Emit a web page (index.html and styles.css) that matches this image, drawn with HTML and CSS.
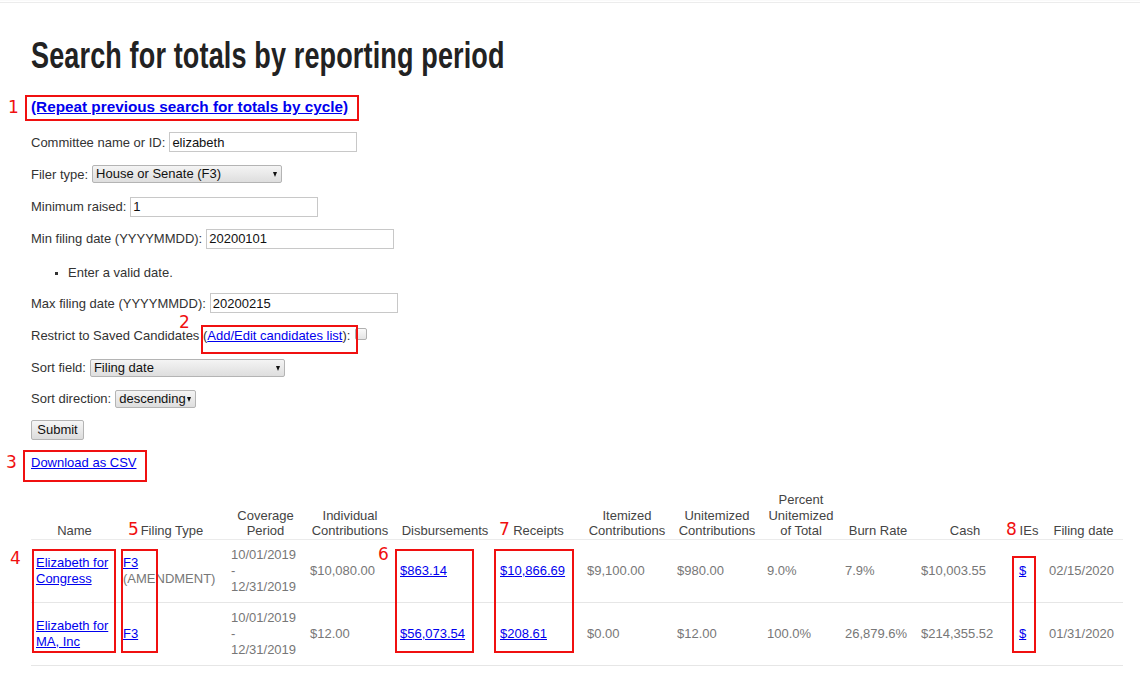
FILE: index.html
```html
<!DOCTYPE html>
<html>
<head>
<meta charset="utf-8">
<title>Search for totals by reporting period</title>
<link rel="stylesheet" href="styles.css">
</head>
<body>
<div class="topbar"></div>
<div class="page">
  <h1 class="title"><span class="title-text">Search for totals by reporting period</span></h1>
  <p class="repeat"><a href="#">(Repeat previous search for totals by cycle)</a></p>

  <form class="form">
    <div class="row"><label>Committee name or ID:</label><input class="text" type="text" value="elizabeth"></div>
    <div class="row"><label>Filer type:</label><span class="sel sel-filer">House or Senate (F3)</span></div>
    <div class="row"><label>Minimum raised:</label><input class="text" type="text" value="1"></div>
    <div class="row"><label>Min filing date (YYYYMMDD):</label><input class="text" type="text" value="20200101"></div>
    <ul class="errors"><li>Enter a valid date.</li></ul>
    <div class="row"><label>Max filing date (YYYYMMDD):</label><input class="text" type="text" value="20200215"></div>
    <div class="row"><label>Restrict to Saved Candidates (<a href="#">Add/Edit candidates list</a>):</label><span class="check"></span></div>
    <div class="row row-tight"><label>Sort field:</label><span class="sel sel-sort">Filing date</span></div>
    <div class="row row-tight"><label>Sort direction:</label><span class="sel sel-dir">descending</span></div>
    <div class="row"><span class="btn">Submit</span></div>
    <div class="row"><a href="#">Download as CSV</a></div>
  </form>

  <table class="results">
    <thead>
      <tr>
        <th class="c-name">Name</th>
        <th class="c-type">Filing Type</th>
        <th class="c-cov">Coverage<br>Period</th>
        <th class="c-ind">Individual<br>Contributions</th>
        <th class="c-dis">Disbursements</th>
        <th class="c-rec">Receipts</th>
        <th class="c-itm">Itemized<br>Contributions</th>
        <th class="c-unit">Unitemized<br>Contributions</th>
        <th class="c-pct">Percent<br>Unitemized<br>of Total</th>
        <th class="c-burn">Burn Rate</th>
        <th class="c-cash">Cash</th>
        <th class="c-ies">IEs</th>
        <th class="c-date">Filing date</th>
      </tr>
    </thead>
    <tbody>
      <tr>
        <td><a href="#">Elizabeth for Congress</a></td>
        <td><a href="#">F3</a><br>(AMENDMENT)</td>
        <td>10/01/2019<br>-<br>12/31/2019</td>
        <td>$10,080.00</td>
        <td><a href="#">$863.14</a></td>
        <td><a href="#">$10,866.69</a></td>
        <td>$9,100.00</td>
        <td>$980.00</td>
        <td>9.0%</td>
        <td>7.9%</td>
        <td>$10,003.55</td>
        <td><a href="#">$</a></td>
        <td>02/15/2020</td>
      </tr>
      <tr>
        <td><a href="#">Elizabeth for MA, Inc</a></td>
        <td><a href="#">F3</a></td>
        <td>10/01/2019<br>-<br>12/31/2019</td>
        <td>$12.00</td>
        <td><a href="#">$56,073.54</a></td>
        <td><a href="#">$208.61</a></td>
        <td>$0.00</td>
        <td>$12.00</td>
        <td>100.0%</td>
        <td>26,879.6%</td>
        <td>$214,355.52</td>
        <td><a href="#">$</a></td>
        <td>01/31/2020</td>
      </tr>
    </tbody>
  </table>
</div>

<div class="notes">
  <div class="box b1"></div><span class="num n1">1</span>
  <div class="box b2"></div><span class="num n2">2</span>
  <div class="box b3"></div><span class="num n3">3</span>
  <div class="box b4"></div><span class="num n4">4</span>
  <div class="box b5"></div><span class="num n5">5</span>
  <div class="box b6"></div><span class="num n6">6</span>
  <div class="box b7"></div><span class="num n7">7</span>
  <div class="box b8"></div><span class="num n8">8</span>
</div>
</body>
</html>
```
FILE: styles.css
```css
html, body {
  margin: 0;
  padding: 0;
  background: #fff;
}
body {
  font-family: "Liberation Sans", Arial, sans-serif;
  font-size: 13px;
  color: #333;
  position: relative;
  min-height: 675px;
}
a { color: #0000ee; }

.topbar {
  height: 1px;
  border-top: 1px solid #fafafa;
  border-bottom: 1px solid #ececec;
}

.page {
  padding: 0 0 0 31px;
}

.title {
  margin: 0;
  padding-top: 33px;
  height: 40px;
  font-family: "Liberation Sans", sans-serif;
  font-weight: bold;
  font-size: 37px;
  line-height: 40px;
  color: #222;
  white-space: nowrap;
}
.title-text {
  display: inline-block;
  transform: scaleX(0.73);
  transform-origin: left center;
  letter-spacing: 0.2px;
}

.repeat {
  margin: 21px 0 0;
  font-size: 15.3px;
  font-weight: bold;
  line-height: 20px;
}

.form {
  margin-top: 15px;
}
.row {
  display: flex;
  align-items: center;
  height: 20px;
  margin-bottom: 12.3px;
  white-space: nowrap;
}
.row-tight { margin-bottom: 11px; }
.row label { margin-right: 4px; }

.text {
  box-sizing: border-box;
  width: 188px;
  height: 20px;
  padding: 1px 2px;
  border: 1px solid #c8c8c8;
  font-family: "Liberation Sans", Arial, sans-serif;
  font-size: 13px;
  color: #111;
  margin: 0;
}

.sel {
  position: relative;
  box-sizing: border-box;
  display: inline-block;
  height: 18px;
  line-height: 16px;
  padding: 0 0 0 3px;
  border: 1px solid #b4b4b4;
  border-radius: 2px;
  background: linear-gradient(#f4f4f4, #dedede);
  color: #111;
}
.sel::after {
  content: "";
  position: absolute;
  right: 4px;
  top: 6px;
  border-left: 2.5px solid transparent;
  border-right: 2.5px solid transparent;
  border-top: 5px solid #111;
}
.sel-filer { width: 190px; }
.sel-sort { width: 195px; }
.sel-dir { width: 81px; }

.check {
  display: inline-block;
  width: 10px;
  height: 10px;
  border: 1px solid #b0b0b0;
  border-radius: 2px;
  background: linear-gradient(#fafafa, #e4e4e4);
  margin: -3px 0 0 1px;
}

.btn {
  box-sizing: border-box;
  display: inline-block;
  width: 53px;
  height: 20px;
  line-height: 18px;
  text-align: center;
  border: 1px solid #b4b4b4;
  border-radius: 2px;
  background: linear-gradient(#f6f6f6, #dcdcdc);
  color: #111;
}

.errors {
  margin: 0 0 11px;
  padding-left: 37px;
  height: 21px;
  line-height: 24px;
  list-style: square;
}
.errors li::marker { font-size: 10px; }

.results {
  margin-top: 20px;
  width: 1092px;
  border-collapse: collapse;
  table-layout: fixed;
  color: #777;
  line-height: 16px;
}
.results th {
  font-weight: normal;
  color: #444;
  text-align: center;
  vertical-align: bottom;
  padding: 0;
  border-bottom: 1px solid #ebebeb;
  line-height: 15.5px;
}
.results td {
  text-align: left;
  vertical-align: middle;
  padding: 7px 5px;
  border-bottom: 1px solid #e6e6e6;
  white-space: normal;
}
.c-name { width: 87px; }
.c-type { width: 108px; }
.c-cov { width: 79px; }
.c-ind { width: 90px; }
.c-dis { width: 100px; }
.c-rec { width: 87px; }
.c-itm { width: 90px; }
.c-unit { width: 90px; }
.c-pct { width: 78px; }
.c-burn { width: 76px; }
.c-cash { width: 98px; }
.c-ies { width: 30px; }
.c-date { width: 79px; }

/* annotations overlaid on the screenshot */
.notes {
  position: absolute;
  left: 0;
  top: 0;
  width: 0;
  height: 0;
}
.box {
  position: absolute;
  box-sizing: border-box;
  border: 2px solid #f01010;
}
.num {
  position: absolute;
  font-family: "DejaVu Sans", sans-serif;
  font-size: 17px;
  line-height: 17px;
  color: #f01010;
}
.b1 { left: 25px; top: 95px; width: 334px; height: 26px; }
.n1 { left: 8px; top: 99px; }
.b2 { left: 201px; top: 325px; width: 157px; height: 29px; }
.n2 { left: 179px; top: 314px; }
.b3 { left: 23px; top: 450px; width: 124px; height: 32px; }
.n3 { left: 6px; top: 454px; }
.b4 { left: 32px; top: 549px; width: 84px; height: 104px; }
.n4 { left: 10px; top: 550px; }
.b5 { left: 121px; top: 549px; width: 37px; height: 104px; }
.n5 { left: 128px; top: 521px; }
.b6 { left: 395px; top: 549px; width: 79px; height: 104px; }
.n6 { left: 378px; top: 546px; }
.b7 { left: 494px; top: 549px; width: 80px; height: 104px; }
.n7 { left: 499px; top: 521px; }
.b8 { left: 1012px; top: 556px; width: 24px; height: 97px; }
.n8 { left: 1006px; top: 521px; }
```
